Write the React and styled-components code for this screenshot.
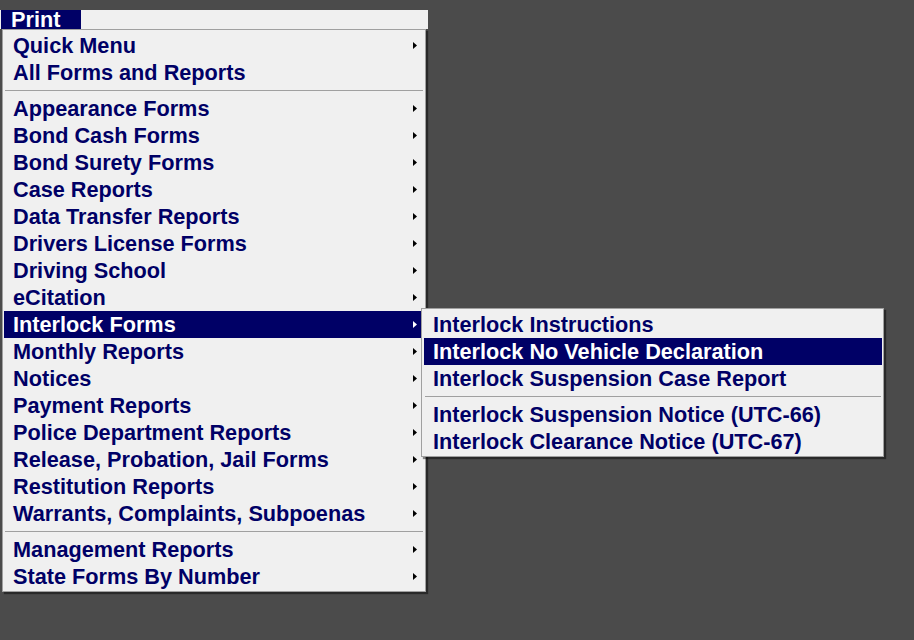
import React from "react";
import styled, { createGlobalStyle } from "styled-components";

const NAVY = "#000066";

const GlobalStyle = createGlobalStyle`
  html, body {
    margin: 0;
    padding: 0;
    background: #4b4b4b;
  }
  body {
    font-family: "Liberation Sans", Arial, sans-serif;
  }
`;

const mainItems = [
  { label: "Quick Menu", sub: true },
  { label: "All Forms and Reports" },
  "sep",
  { label: "Appearance Forms", sub: true },
  { label: "Bond Cash Forms", sub: true },
  { label: "Bond Surety Forms", sub: true },
  { label: "Case Reports", sub: true },
  { label: "Data Transfer Reports", sub: true },
  { label: "Drivers License Forms", sub: true },
  { label: "Driving School", sub: true },
  { label: "eCitation", sub: true },
  { label: "Interlock Forms", sub: true, open: true },
  { label: "Monthly Reports", sub: true },
  { label: "Notices", sub: true },
  { label: "Payment Reports", sub: true },
  { label: "Police Department Reports", sub: true },
  { label: "Release, Probation, Jail Forms", sub: true },
  { label: "Restitution Reports", sub: true },
  { label: "Warrants, Complaints, Subpoenas", sub: true },
  "sep",
  { label: "Management Reports", sub: true },
  { label: "State Forms By Number", sub: true }
];

const interlockItems = [
  { label: "Interlock Instructions" },
  { label: "Interlock No Vehicle Declaration", active: true },
  { label: "Interlock Suspension Case Report" },
  "sep",
  { label: "Interlock Suspension Notice (UTC-66)" },
  { label: "Interlock Clearance Notice (UTC-67)" }
];

const Screen = styled.div`
  padding-top: 10px;
  min-height: 100vh;
  box-sizing: border-box;
`;

const MenuBar = styled.div`
  width: 428px;
  height: 19px;
  background: #f0f0f0;
  display: flex;
`;

const MenuTitle = styled.div`
  margin-left: 1px;
  width: 80px;
  height: 19px;
  padding-left: 10px;
  box-sizing: border-box;
  background: ${NAVY};
  color: #fff;
  font-weight: bold;
  font-size: 21.7px;
  line-height: 20px;
`;

const Menu = styled.div`
  position: ${({ $sub }) => ($sub ? "absolute" : "relative")};
  top: ${({ $sub }) => ($sub ? "-3px" : "auto")};
  left: ${({ $sub }) => ($sub ? "417px" : "auto")};
  margin-left: ${({ $sub }) => ($sub ? "0" : "2px")};
  width: ${({ $width }) => $width}px;
  box-sizing: border-box;
  background: #f0f0f0;
  border: 1px solid #a0a0a0;
  padding: ${({ $sub }) => ($sub ? "2px 1px 1px 2px" : "2px 1px 1px 1px")};
  box-shadow: 2px 2px 1px rgba(0, 0, 0, 0.45);
  z-index: ${({ $sub }) => ($sub ? 2 : 1)};
`;

const Item = styled.div`
  position: relative;
  display: flex;
  align-items: center;
  height: 27px;
  padding: 0 7px 0 9px;
  background: ${({ $active }) => ($active ? NAVY : "transparent")};
  color: ${({ $active }) => ($active ? "#fff" : NAVY)};
  font-weight: bold;
  font-size: 21.7px;
  line-height: 27px;
  white-space: nowrap;
`;

const Label = styled.span`
  flex: 1;
`;

const Arrow = styled.svg`
  display: block;
  width: 4px;
  height: 7px;
  fill: ${({ $active }) => ($active ? "#fff" : "#000")};
`;

const Separator = styled.div`
  height: 9px;
  display: flex;
  align-items: center;
  padding: 0 1px;
  &::after {
    content: "";
    flex: 1;
    height: 1px;
    background: #a0a0a0;
  }
`;

const SubArrow = ({ active }) => (
  <Arrow $active={active} viewBox="0 0 4 7">
    <path d="M0 0L4 3.5L0 7Z" />
  </Arrow>
);

const renderItems = (items, children) =>
  items.map((item, i) =>
    item === "sep" ? (
      <Separator key={`sep-${i}`} />
    ) : (
      <Item key={item.label} $active={item.active || item.open}>
        <Label>{item.label}</Label>
        {item.sub && <SubArrow active={item.active || item.open} />}
        {item.open && children}
      </Item>
    )
  );

export default function App() {
  return (
    <Screen>
      <GlobalStyle />
      <MenuBar>
        <MenuTitle>Print</MenuTitle>
      </MenuBar>
      <Menu $width={424}>
        {renderItems(
          mainItems,
          <Menu $sub $width={463}>
            {renderItems(interlockItems)}
          </Menu>
        )}
      </Menu>
    </Screen>
  );
}
